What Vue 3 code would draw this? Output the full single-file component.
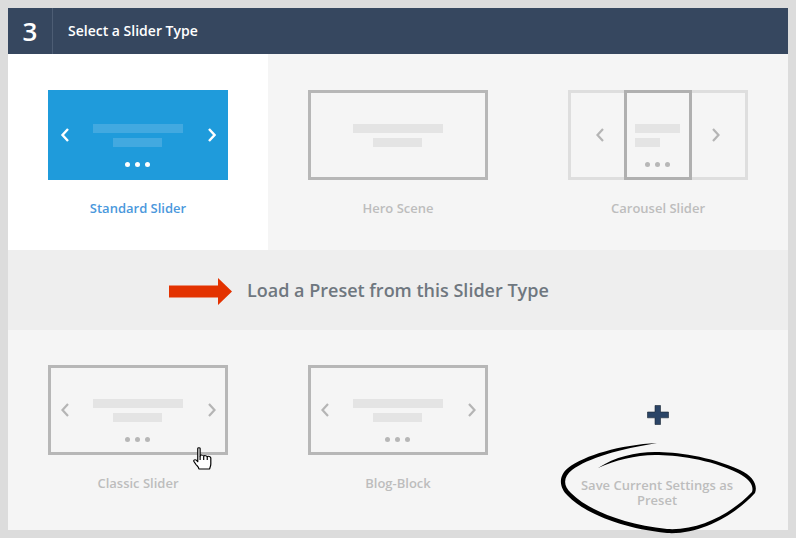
<script setup>
const presets = [{ label: 'Classic Slider', hand: true }, { label: 'Blog-Block', hand: false }]
</script>

<template>
  <div class="page">
    <section class="panel">
      <header class="head">
        <div class="num">3</div>
        <h1 class="title">Select a Slider Type</h1>
      </header>

      <div class="row top">
        <div class="tile active">
          <div class="thumb blue">
            <svg class="chev" viewBox="0 0 10 16"><path d="M8 2 2.500 8 8 14" /></svg>
            <div class="mid">
              <div class="bar long"></div>
              <div class="bar short"></div>
              <div class="dots"><i></i><i></i><i></i></div>
            </div>
            <svg class="chev" viewBox="0 0 10 16"><path d="M3 2 8.500 8 3 14" /></svg>
          </div>
          <div class="label">Standard Slider</div>
        </div>

        <div class="tile">
          <div class="thumb">
            <div class="mid plain">
              <div class="bar long"></div>
              <div class="bar short"></div>
            </div>
          </div>
          <div class="label">Hero Scene</div>
        </div>

        <div class="tile">
          <div class="thumb carousel">
            <div class="side left">
              <svg class="chev" viewBox="0 0 10 16"><path d="M8 2 2.500 8 8 14" /></svg>
            </div>
            <div class="frame">
              <div class="bar c-long"></div>
              <div class="bar c-short"></div>
              <div class="dots"><i></i><i></i><i></i></div>
            </div>
            <div class="side right">
              <svg class="chev" viewBox="0 0 10 16"><path d="M2 2 7.500 8 2 14" /></svg>
            </div>
          </div>
          <div class="label">Carousel Slider</div>
        </div>
      </div>

      <div class="band">
        <svg class="arrow" width="63" height="27" viewBox="0 0 63 27"><path d="M0 7.500H49V0L63 13.500 49 27V19.500H0Z" fill="#e33200" /></svg>
        <h2 class="band-text">Load a Preset from this Slider Type</h2>
      </div>

      <div class="row bottom">
        <div v-for="p in presets" :key="p.label" class="tile">
          <div class="thumb">
            <svg class="chev" viewBox="0 0 10 16"><path d="M8 2 2.500 8 8 14" /></svg>
            <div class="mid">
              <div class="bar long"></div>
              <div class="bar short"></div>
              <div class="dots"><i></i><i></i><i></i></div>
            </div>
            <svg class="chev" viewBox="0 0 10 16"><path d="M3 2 8.500 8 3 14" /></svg>
            <svg v-if="p.hand" class="hand" width="19" height="23" viewBox="0 0 16 23" preserveAspectRatio="none">
              <path d="M4 1.500C4 .5 6 .5 6 1.500V9C6.300 7.800 8.700 7.800 9 9.200 9.400 8.300 11.600 8.400 12 9.800 12.500 9 15 9.300 15 11V17C15 19 14.300 20 14 22H5C4.800 20 3.600 19 2.500 17.500L.8 14.500C.2 13 1.800 12.200 2.800 13.200L4 14.800Z" fill="#fff" stroke="#000" stroke-width="1" stroke-linejoin="round" />
              <path d="M6 9V13M9 9.200V13M12 9.800V13" stroke="#000" stroke-width="1" fill="none" />
            </svg>
          </div>
          <div class="label">{{ p.label }}</div>
        </div>

        <div class="tile save">
          <svg class="plus" width="22" height="20" viewBox="0 0 22 20">
            <path d="M8 0.500H13.500V7H21.500V12.800H13.500V19.500H8V12.800H0.500V7H8Z" fill="#2a4466" stroke="#1a2533" stroke-width="0.600" />
          </svg>
          <div class="label save-label">Save Current Settings as Preset</div>
          <svg class="scribble" width="200" height="96" viewBox="0 0 200 96">
            <path d="M97 0C60 2 25 12 8 25-2 33-1 45 8 53 25 70 60 85 107 90 140 92 175 72 195 50 198 42 193 33 180 27 150 13 115 9 95 9 75 9 55 14 38 25 55 17 75 12.500 95 12 115 12 150 16 178 30 190 36 194 43 192 49 172 70 140 88 107 86 62 81 28 67 11 50 3 43 3 34 12 27 28 15 60 6 97 0Z" fill="#000" />
          </svg>
        </div>
      </div>
    </section>
  </div>
</template>

<style>
html, body { margin: 0; background: #dcdcdc; }
</style>

<style scoped>
.page {
  width: 796px;
  height: 538px;
  padding: 8px;
  box-sizing: border-box;
  background: #dcdcdc;
  font-family: "Open Sans", "Liberation Sans", sans-serif;
  overflow: hidden;
}
.panel { width: 780px; height: 522px; background: #f5f5f5; }
.head { display: flex; align-items: center; height: 46px; background: #36475f; color: #fff; }
.num {
  width: 44px; height: 46px; line-height: 46px; text-align: center;
  border-right: 1px solid #4d5d74; font-size: 26px; font-weight: 600;
}
.title { margin: 0 0 0 15px; font-size: 14px; font-weight: 600; line-height: 46px; }
.row { display: grid; grid-template-columns: repeat(3, 260px); }
.top { height: 196px; }
.bottom { height: 200px; }
.tile { padding: 36px 40px 0; box-sizing: border-box; background: #f5f5f5; }
.bottom .tile { padding-top: 35px; }
.tile.active { background: #fff; }
.thumb {
  position: relative; width: 180px; height: 90px; box-sizing: border-box;
  border: 3px solid #b7b7b7; padding: 0 9px;
  display: flex; justify-content: space-between; align-items: center;
}
.thumb.blue { background: #1f9bdb; border-color: #1f9bdb; }
.chev { width: 10px; height: 16px; flex: none; }
.chev path { fill: none; stroke: #b5b5b5; stroke-width: 2.200; }
.blue .chev path { stroke: #fff; stroke-width: 2.400; }
.mid {
  align-self: flex-start; width: 120px; padding-top: 31px;
  display: flex; flex-direction: column; align-items: center; gap: 5px;
}
.mid.plain { margin: 0 auto; }
.bar { height: 9px; background: #e4e4e4; }
.long { width: 90px; }
.short { width: 49px; margin-right: 1px; }
.blue .bar { background: #42a9e0; }
.dots { display: flex; gap: 5px; margin: 10px 2px 0 0; }
.dots i { width: 5px; height: 5px; border-radius: 50%; background: #b7b7b7; }
.blue .dots i { background: #fff; }
.label {
  margin-top: 20px; text-align: center; font-size: 13px; font-weight: 600;
  line-height: 16px; color: #bdbdbd;
}
.active .label { color: #4a98dc; }
.carousel { border-color: #dedede; padding: 0; justify-content: flex-start; align-items: stretch; }
.side { display: flex; align-items: center; }
.side.left { width: 53px; padding-left: 24px; box-sizing: border-box; }
.side.right { padding-left: 19px; }
.frame {
  width: 68px; margin: -3px 0; box-sizing: border-box; border: 3px solid #b0b0b0;
  padding: 31px 8px 0; display: flex; flex-direction: column; gap: 5px; align-items: flex-start;
}
.c-long { width: 45px; }
.c-short { width: 25px; }
.frame .dots { margin: 10px 0 0 10px; }
.band { display: flex; align-items: center; height: 80px; padding-left: 161px; box-sizing: border-box; background: #eeeeee; }
.arrow { flex: none; margin-top: 3px; }
.band-text { margin: 0 0 0 15px; font-size: 18px; font-weight: 600; color: #6f777f; }
.save { position: relative; display: flex; flex-direction: column; align-items: center; padding-top: 75px !important; }
.plus { flex: none; }
.save-label { margin-top: 53px; line-height: 15px; margin-right: 2px; }
.hand { position: absolute; left: 142px; top: 79px; }
.scribble { position: absolute; left: 32px; top: 113px; overflow: visible; pointer-events: none; }
</style>
